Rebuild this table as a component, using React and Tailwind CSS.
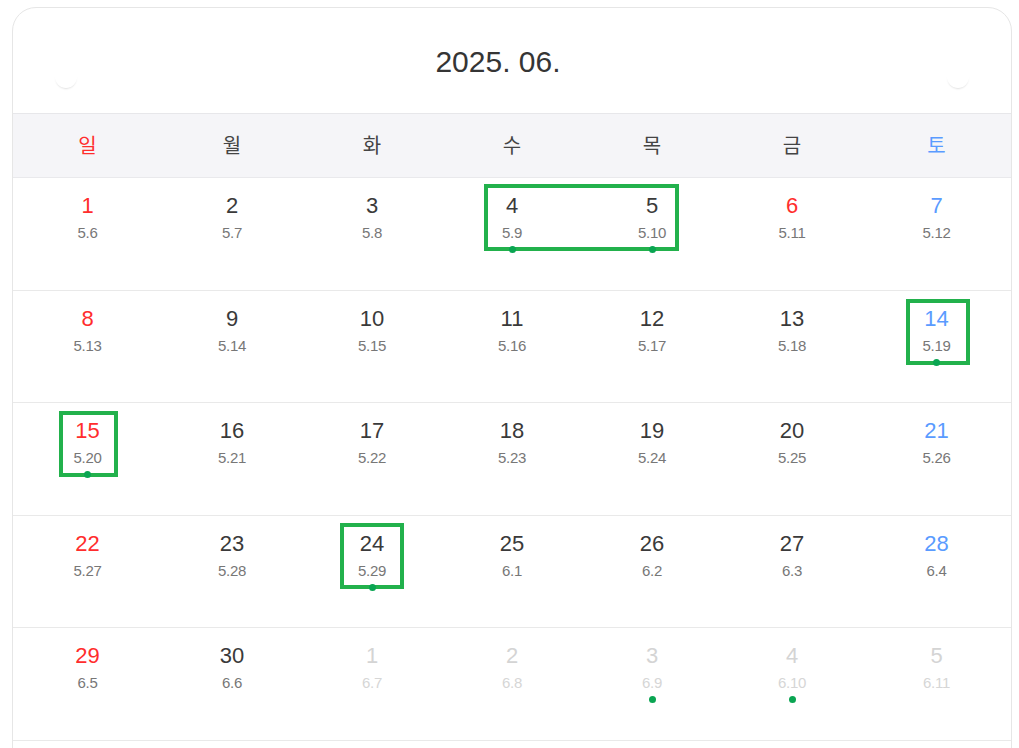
import React from "react";

const weekdays = [
  { label: "일", color: "text-[#ff2d2d]" },
  { label: "월", color: "text-[#444]" },
  { label: "화", color: "text-[#444]" },
  { label: "수", color: "text-[#444]" },
  { label: "목", color: "text-[#444]" },
  { label: "금", color: "text-[#444]" },
  { label: "토", color: "text-[#5a9bff]" },
];

// day, lunar date, in current month, has event dot, holiday
const weeks = [
  [
    [1, "5.6"], [2, "5.7"], [3, "5.8"], [4, "5.9", true, true], [5, "5.10", true, true], [6, "5.11", true, false, true], [7, "5.12"],
  ],
  [
    [8, "5.13"], [9, "5.14"], [10, "5.15"], [11, "5.16"], [12, "5.17"], [13, "5.18"], [14, "5.19", true, true],
  ],
  [
    [15, "5.20", true, true], [16, "5.21"], [17, "5.22"], [18, "5.23"], [19, "5.24"], [20, "5.25"], [21, "5.26"],
  ],
  [
    [22, "5.27"], [23, "5.28"], [24, "5.29", true, true], [25, "6.1"], [26, "6.2"], [27, "6.3"], [28, "6.4"],
  ],
  [
    [29, "6.5"], [30, "6.6"], [1, "6.7", false], [2, "6.8", false], [3, "6.9", false, true], [4, "6.10", false, true], [5, "6.11", false],
  ],
];

// green highlight boxes drawn over the grid, per week row
const marks = {
  0: [{ left: "left-[471px]", top: "top-[6px]", w: "w-[195px]", h: "h-[67px]" }],
  1: [{ left: "left-[893px]", top: "top-[8px]", w: "w-[64px]", h: "h-[66px]" }],
  2: [{ left: "left-[46px]", top: "top-[8px]", w: "w-[59px]", h: "h-[66px]" }],
  3: [{ left: "left-[327px]", top: "top-[7px]", w: "w-[64px]", h: "h-[66px]" }],
};

const gridCols = "grid grid-cols-[149px_repeat(5,140px)_149px]";

function DayCell({ day, lunar, inMonth = true, dot = false, holiday = false, col }) {
  let numColor = "text-[#3a3a3a]";
  if (col === 0 || holiday) numColor = "text-[#ff2d2d]";
  if (col === 6) numColor = "text-[#5a9bff]";
  if (!inMonth) numColor = "text-[#d4d4d4]";

  return (
    <div className="flex flex-col items-center pt-[15px]">
      <span className={`text-[22px] leading-[26px] ${numColor}`}>{day}</span>
      <span
        className={`mt-[5px] text-[15px] leading-[18px] tracking-[-0.3px] ${
          inMonth ? "text-[#777]" : "text-[#d6d6d6]"
        }`}
      >
        {lunar}
      </span>
      {dot && (
        <span className="relative z-10 mt-[4px] w-[7px] h-[7px] rounded-full bg-[#0aa552]" />
      )}
    </div>
  );
}

export default function App() {
  return (
    <div className="min-h-screen bg-white font-['Liberation_Sans','Noto_Sans_CJK_KR',sans-serif]">
      <div className="ml-[12px] mt-[7px] w-[1000px] rounded-t-3xl border border-[#e6e6e6] bg-white overflow-hidden">
        {/* Title */}
        <div className="relative h-[106px] flex items-center justify-center border-b border-[#e7e7ea]">
          <span className="mr-[28px] mt-[2px] text-[30px] text-[#353535]">2025. 06.</span>
          <span className="absolute left-[42px] top-[58px] w-[22px] h-[22px] rounded-full bg-white shadow-[0_2px_2px_-1px_rgba(0,0,0,0.13)]" />
          <span className="absolute left-[934px] top-[58px] w-[22px] h-[22px] rounded-full bg-white shadow-[0_2px_2px_-1px_rgba(0,0,0,0.13)]" />
        </div>

        {/* Weekday header */}
        <div className={`${gridCols} h-[64px] bg-[#f5f5f8] border-b border-[#e9e9ec]`}>
          {weekdays.map((w) => (
            <div key={w.label} className={`flex items-center justify-center text-[20px] ${w.color}`}>
              {w.label}
            </div>
          ))}
        </div>

        {/* Weeks */}
        {weeks.map((week, wi) => (
          <div key={wi} className={`relative ${gridCols} h-[112.5px] border-b border-[#e9e9e9]`}>
            {week.map(([day, lunar, inMonth, dot, holiday], ci) => (
              <DayCell
                key={ci}
                day={day}
                lunar={lunar}
                inMonth={inMonth !== false}
                dot={dot}
                holiday={holiday}
                col={ci}
              />
            ))}
            {(marks[wi] || []).map((m, i) => (
              <div
                key={i}
                className={`absolute ${m.left} ${m.top} ${m.w} ${m.h} border-[4px] border-[#22b14c]`}
              />
            ))}
          </div>
        ))}
        <div className="h-[60px]" />
      </div>
    </div>
  );
}
